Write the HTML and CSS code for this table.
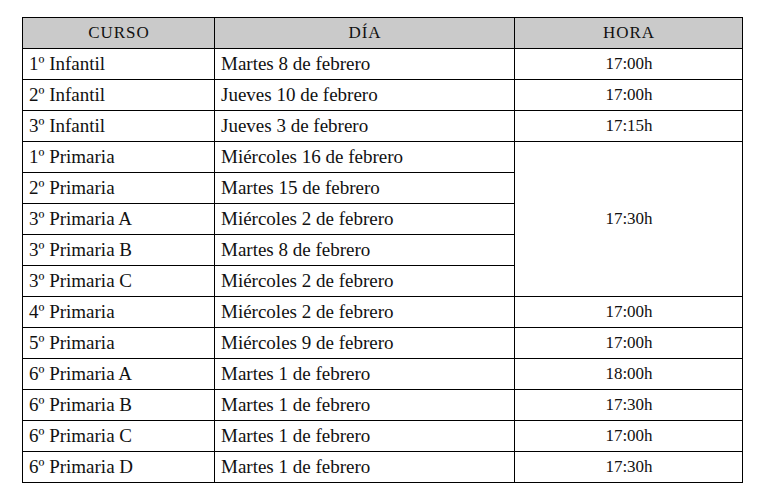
FILE: index.html
```html
<!DOCTYPE html>
<html lang="es">
<head>
<meta charset="utf-8">
<link rel="stylesheet" href="styles.css">
</head>
<body>
<table class="horario">
  <colgroup>
    <col class="c-curso">
    <col class="c-dia">
    <col class="c-hora">
  </colgroup>
  <thead>
    <tr><th>CURSO</th><th>DÍA</th><th>HORA</th></tr>
  </thead>
  <tbody>
    <tr><td>1º Infantil</td><td>Martes 8 de febrero</td><td class="hora">17:00h</td></tr>
    <tr><td>2º Infantil</td><td>Jueves 10 de febrero</td><td class="hora">17:00h</td></tr>
    <tr><td>3º Infantil</td><td>Jueves 3 de febrero</td><td class="hora">17:15h</td></tr>
    <tr><td>1º Primaria</td><td>Miércoles 16 de febrero</td><td class="hora" rowspan="5">17:30h</td></tr>
    <tr><td>2º Primaria</td><td>Martes 15 de febrero</td></tr>
    <tr><td>3º Primaria A</td><td>Miércoles 2 de febrero</td></tr>
    <tr><td>3º Primaria B</td><td>Martes 8 de febrero</td></tr>
    <tr><td>3º Primaria C</td><td>Miércoles 2 de febrero</td></tr>
    <tr><td>4º Primaria</td><td>Miércoles 2 de febrero</td><td class="hora">17:00h</td></tr>
    <tr><td>5º Primaria</td><td>Miércoles 9 de febrero</td><td class="hora">17:00h</td></tr>
    <tr><td>6º Primaria A</td><td>Martes 1 de febrero</td><td class="hora">18:00h</td></tr>
    <tr><td>6º Primaria B</td><td>Martes 1 de febrero</td><td class="hora">17:30h</td></tr>
    <tr><td>6º Primaria C</td><td>Martes 1 de febrero</td><td class="hora">17:00h</td></tr>
    <tr><td>6º Primaria D</td><td>Martes 1 de febrero</td><td class="hora">17:30h</td></tr>
  </tbody>
</table>
</body>
</html>
```
FILE: styles.css
```css
html, body {
  margin: 0;
  padding: 0;
  background: #ffffff;
}
body {
  font-family: "Liberation Serif", "Times New Roman", serif;
  color: #111;
}
.horario {
  border-collapse: collapse;
  margin: 17px 0 0 22px;
  table-layout: fixed;
  width: 720px;
}
.c-curso { width: 192px; }
.c-dia { width: 300px; }
.c-hora { width: 228px; }
.horario th,
.horario td {
  border: 1px solid #000;
  height: 30px;
  padding: 0 5px 0 6px;
  box-sizing: border-box;
  font-size: 19px;
  font-weight: normal;
  text-align: left;
  vertical-align: middle;
  white-space: nowrap;
}
.horario tr { height: 31px; }
.horario th {
  background: #cacaca;
  text-align: center;
  font-size: 17px;
  letter-spacing: 1px;
}
.horario td.hora {
  text-align: center;
  font-size: 17px;
}
```
